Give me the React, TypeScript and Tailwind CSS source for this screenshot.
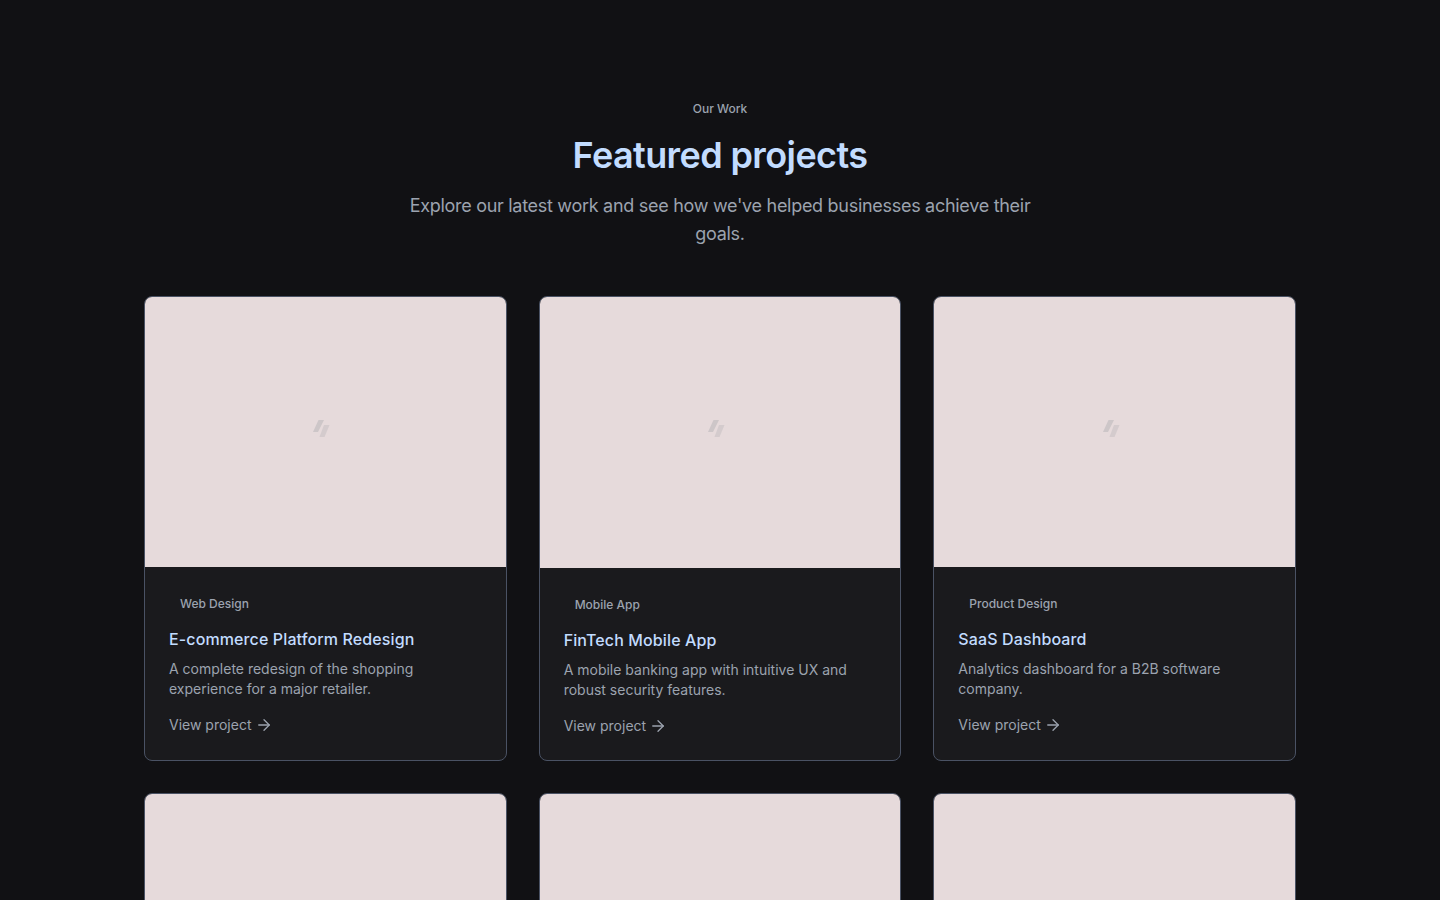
import { ArrowRight } from "lucide-react";

const projects = [
  {
    category: "Web Design",
    title: "E-commerce Platform Redesign",
    description: "A complete redesign of the shopping experience for a major retailer.",
  },
  {
    category: "Mobile App",
    title: "FinTech Mobile App",
    description: "A mobile banking app with intuitive UX and robust security features.",
  },
  {
    category: "Product Design",
    title: "SaaS Dashboard",
    description: "Analytics dashboard for a B2B software company.",
  },
  {
    category: "Branding",
    title: "Brand Identity System",
    description: "A full visual identity for a growing lifestyle startup.",
  },
  {
    category: "Web Design",
    title: "Healthcare Portal",
    description: "An accessible patient portal for a regional hospital network.",
  },
  {
    category: "Mobile App",
    title: "Travel Companion",
    description: "A trip planning app with offline maps and smart itineraries.",
  },
];

function PlaceholderIcon() {
  return (
    <svg width="18" height="18" viewBox="0 0 18 18" className="mr-2 mb-2 text-[#cdc6c8]">
      <path d="M6.5 1H12L6 13H1z" fill="currentColor" />
      <path d="M12 6h5.5l-5 12H7.5z" fill="currentColor" opacity="0.75" />
    </svg>
  );
}

function ProjectCard({ category, title, description }: (typeof projects)[number]) {
  return (
    <div className="flex flex-col overflow-hidden rounded-lg border border-[#4a5264] bg-[#1a1a1d]">
      <div className="flex aspect-[4/3] items-center justify-center bg-[#e6dadb]">
        <PlaceholderIcon />
      </div>
      <div className="flex flex-col p-6">
        <span className="self-start px-[11px] pt-[5px] pb-[3px] text-xs leading-4 font-medium text-[#9ca3af]">{category}</span>
        <h3 className="mt-3 text-base leading-6 font-medium tracking-[0.12px] text-[#c2dcff]">{title}</h3>
        <p className="mt-2 text-sm leading-5 text-[#9ca3af]">{description}</p>
        <a href="#" className="mt-4 flex items-center gap-[3px] text-sm leading-5 text-[#9ca3af]">
          View project
          <ArrowRight size={18} strokeWidth={1.75} />
        </a>
      </div>
    </div>
  );
}

export default function App() {
  return (
    <div className="min-h-screen bg-[#111114] font-['Inter','Liberation_Sans',sans-serif]">
      <section className="mx-auto max-w-[1152px] pt-[101px] pb-24">
        <div className="mx-auto flex max-w-[672px] flex-col items-center text-center">
          <span className="text-xs leading-4 font-medium text-[#9ca3af]">Our Work</span>
          <h2 className="mt-4 text-4xl leading-[45px] font-semibold tracking-[-0.6px] text-[#c2dcff]">Featured projects</h2>
          <p className="mt-[14px] text-lg leading-7 tracking-[-0.29px] text-[#9ca3af]">
            Explore our latest work and see how we've helped businesses achieve their goals.
          </p>
        </div>
        <div className="mt-12 grid grid-cols-3 gap-8">
          {projects.map((p) => (
            <ProjectCard key={p.title} {...p} />
          ))}
        </div>
      </section>
    </div>
  );
}
